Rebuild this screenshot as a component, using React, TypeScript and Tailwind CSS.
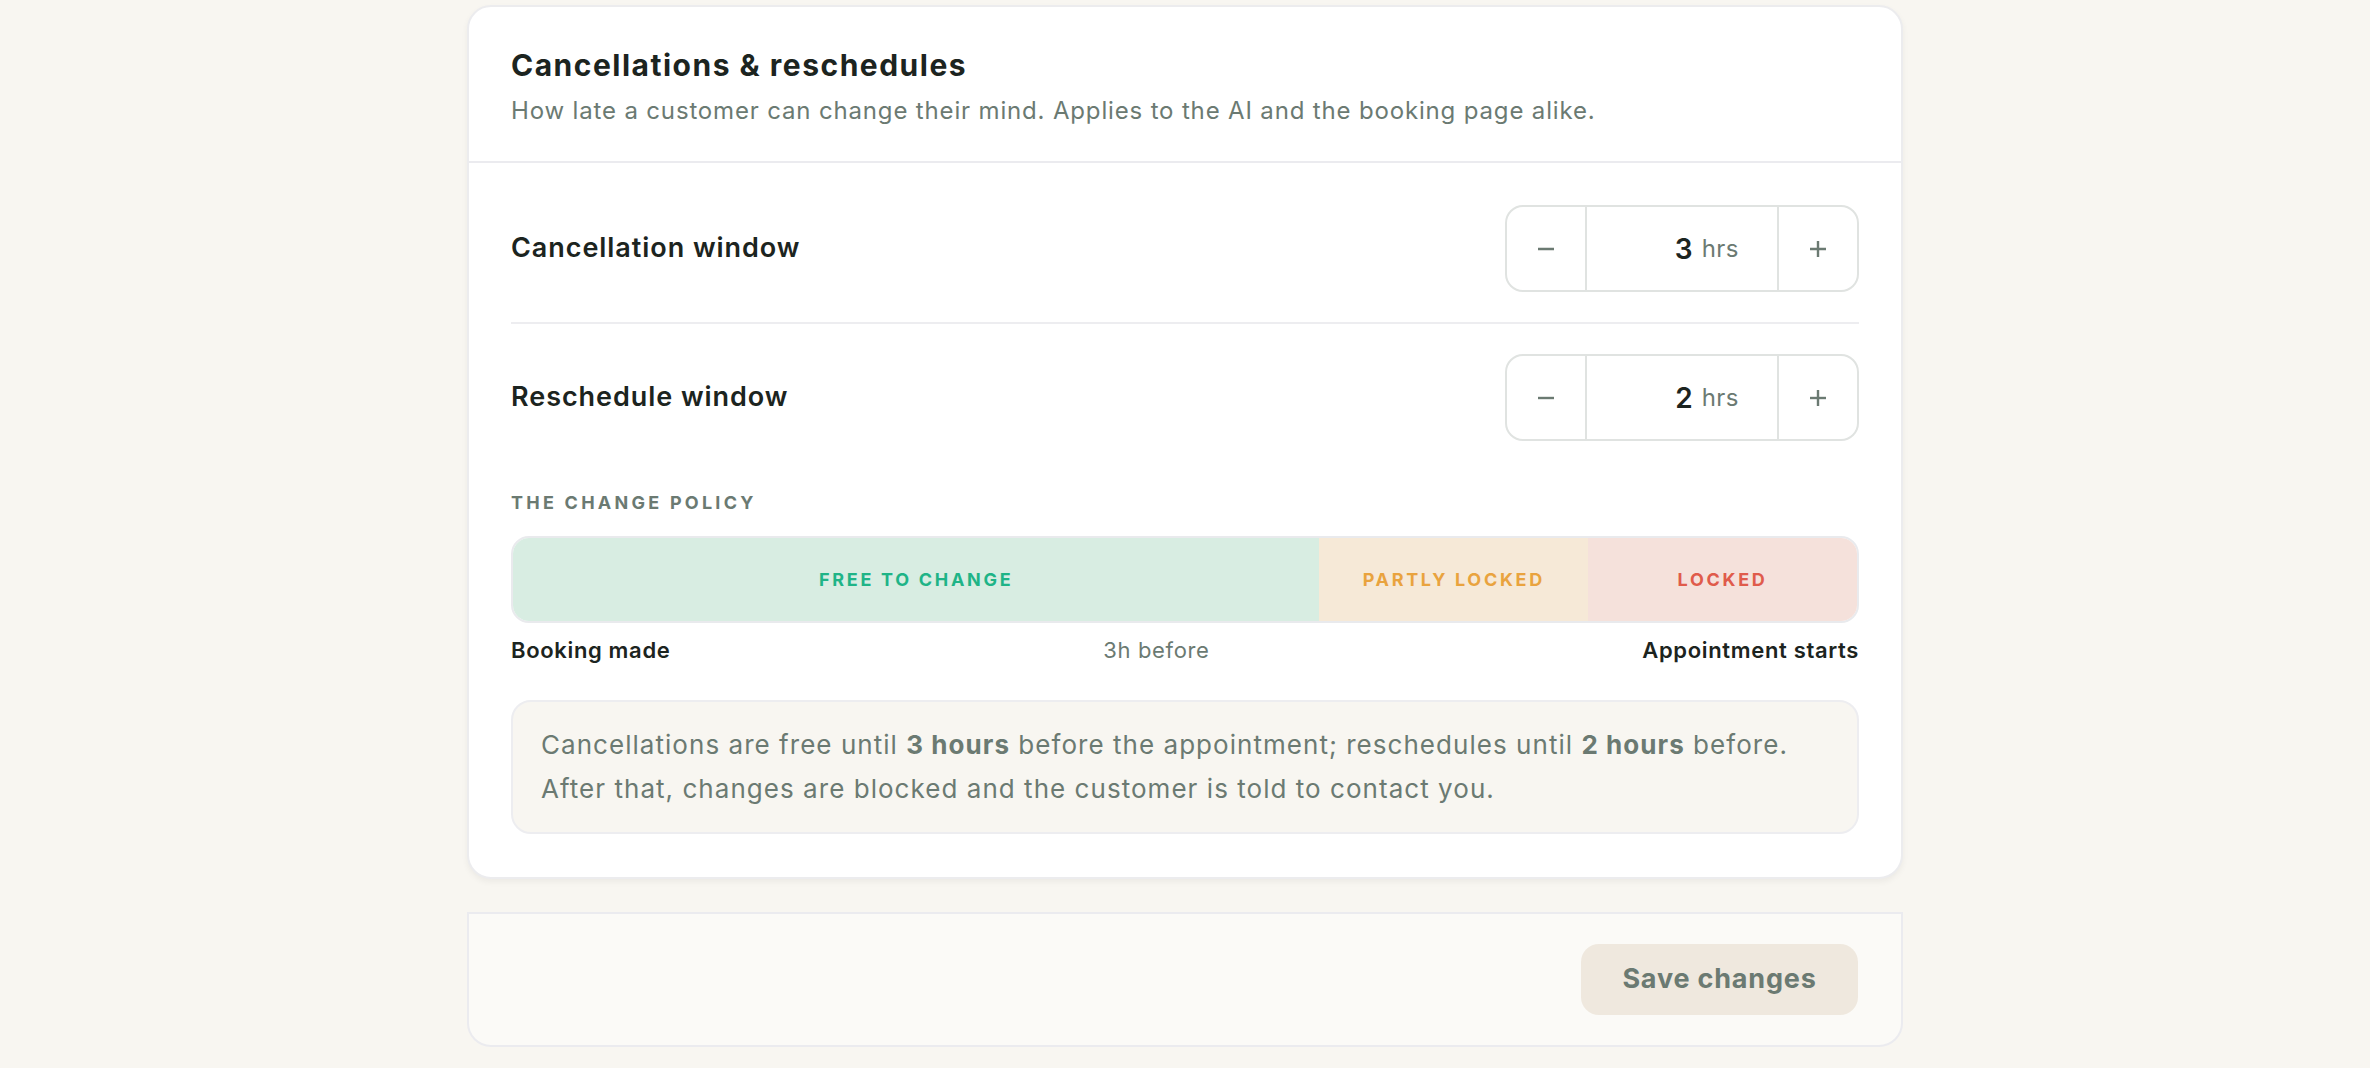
import React from "react";

const font = { fontFamily: "Inter, 'Noto Sans', sans-serif" };

function MinusIcon() {
  return (
    <svg width="18" height="18" viewBox="0 0 18 18" fill="none">
      <line x1="1" y1="9" x2="17" y2="9" stroke="#6b7a72" strokeWidth="2.4" />
    </svg>
  );
}

function PlusIcon() {
  return (
    <svg width="18" height="18" viewBox="0 0 18 18" fill="none">
      <line x1="1" y1="9" x2="17" y2="9" stroke="#6b7a72" strokeWidth="2.4" />
      <line x1="9" y1="1" x2="9" y2="17" stroke="#6b7a72" strokeWidth="2.4" />
    </svg>
  );
}

function Stepper({ value }: { value: number }) {
  return (
    <div className="flex h-[87px] w-[354px] rounded-[18px] border-2 border-[#e0e3e1] bg-white">
      <button className="flex w-[80px] items-center justify-center border-r-2 border-[#e0e3e1]">
        <MinusIcon />
      </button>
      <div className="flex flex-1 items-center justify-end gap-[9px] pr-[38px]">
        <span className="text-[28px] font-semibold text-[#1c2420]">{value}</span>
        <span className="text-[24px] tracking-[0.02em] text-[#6b7a72]">hrs</span>
      </div>
      <button className="flex w-[80px] items-center justify-center border-l-2 border-[#e0e3e1]">
        <PlusIcon />
      </button>
    </div>
  );
}

function Row({ label, value, divider }: { label: string; value: number; divider?: boolean }) {
  return (
    <div className={`flex items-center justify-between py-[30px] ${divider ? "border-b-2 border-[#ededf0]" : ""}`}>
      <span className="text-[27px] font-semibold tracking-[0.035em] text-[#1c2420]">{label}</span>
      <Stepper value={value} />
    </div>
  );
}

export default function App() {
  return (
    <div className="min-h-screen bg-[#f8f6f1] pt-[5px]" style={font}>
      <div className="mx-auto w-[1436px]">
        {/* Card */}
        <div className="overflow-hidden rounded-[24px] border-2 border-[#ececee] bg-white shadow-[0_3px_6px_rgba(0,0,0,0.05)]">
          <div className="border-b-2 border-[#ebebef] px-[42px] pb-[32px] pt-[38px]">
            <h2 className="text-[30px] font-bold leading-[40px] tracking-[0.05em] text-[#1c2420]">
              Cancellations &amp; reschedules
            </h2>
            <p className="mt-[8px] text-[24px] leading-[36px] tracking-[0.035em] text-[#6b7a72]">
              How late a customer can change their mind. Applies to the AI and the booking page alike.
            </p>
          </div>

          <div className="px-[42px] pb-[43px] pt-[12px]">
            <Row label="Cancellation window" value={3} divider />
            <Row label="Reschedule window" value={2} />

            <div className="mt-[20px] text-[18px] font-bold uppercase leading-[24px] tracking-[0.18em] text-[#6b7a72]">
              The change policy
            </div>

            <div className="mt-[21px] flex h-[87px] overflow-hidden rounded-[18px] border-2 border-[#e9eaed]">
              <div className="flex w-[60%] items-center justify-center bg-[#d8ede2] text-[18px] font-bold tracking-[0.15em] text-[#1fb487]">
                FREE TO CHANGE
              </div>
              <div className="flex w-[20%] items-center justify-center bg-[#f6e9d7] text-[18px] font-bold tracking-[0.15em] text-[#e9a33e]">
                PARTLY LOCKED
              </div>
              <div className="flex w-[20%] items-center justify-center bg-[#f5e1db] text-[18px] font-bold tracking-[0.15em] text-[#e05b4b]">
                LOCKED
              </div>
            </div>

            <div className="mt-[12px] flex items-center justify-between text-[22px] leading-[30px] tracking-[0.03em]">
              <span className="font-semibold text-[#1c2420]">Booking made</span>
              <span className="text-[#6b7a72]">3h before</span>
              <span className="font-semibold text-[#1c2420]">Appointment starts</span>
            </div>

            <div className="mt-[35px] rounded-[20px] border-2 border-[#ededf0] bg-[#f8f6f1] px-[28px] py-[21px] text-[26px] leading-[44px] tracking-[0.04em] text-[#6b7a72]">
              Cancellations are free until <b className="font-bold">3 hours</b> before the appointment; reschedules until{" "}
              <b className="font-bold">2 hours</b> before.
              <br />
              After that, changes are blocked and the customer is told to contact you.
            </div>
          </div>
        </div>

        {/* Footer */}
        <div className="mt-[33px] flex justify-end rounded-b-[24px] border-2 border-[#ebebef] bg-[#fbfaf7] px-[43px] py-[30px]">
          <button className="h-[71px] w-[277px] rounded-[18px] bg-[#efe8de] text-[27px] font-bold tracking-[0.03em] text-[#6b7a72]">
            Save changes
          </button>
        </div>
      </div>
    </div>
  );
}
